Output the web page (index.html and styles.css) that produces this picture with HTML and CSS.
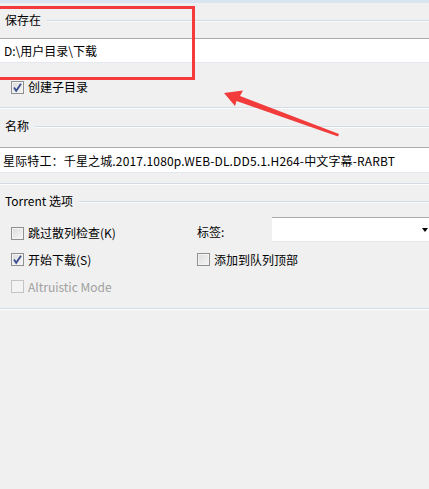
FILE: index.html
```html
<!DOCTYPE html>
<html>
<head>
<meta charset="utf-8">
<link rel="stylesheet" href="styles.css">
</head>
<body>
<div class="topstrip"></div>

<div class="group-head"><span class="gh-label">保存在</span><span class="gh-line"></span></div>
<div class="field field-path">D:\用户目录\下载</div>
<div class="row row-sub">
  <span class="cb checked"><svg viewBox="0 0 13 13" width="13" height="13"><path d="M3 6.5 L5.2 9.8 L10 2.8" fill="none" stroke="#3b4e8f" stroke-width="1.8"/></svg></span>
  <span class="cb-text">创建子目录</span>
</div>
<div class="sep sep1"></div>

<div class="group-head"><span class="gh-label">名称</span><span class="gh-line"></span></div>
<div class="field field-name">星际特工：千星之城.2017.1080p.WEB-DL.DD5.1.H264-中文字幕-RARBT</div>
<div class="sep sep2"></div>

<div class="group-head head3"><span class="gh-label">Torrent 选项</span><span class="gh-line"></span></div>
<div class="opts">
  <div class="opt-row r1">
    <div class="col-left">
      <span class="cb"></span><span class="cb-text">跳过散列检查(K)</span>
    </div>
    <div class="col-right">
      <span class="tag-label">标签:</span>
      <div class="combo"><span class="combo-arrow"></span></div>
    </div>
  </div>
  <div class="opt-row r2">
    <div class="col-left">
      <span class="cb checked"><svg viewBox="0 0 13 13" width="13" height="13"><path d="M3 6.5 L5.2 9.8 L10 2.8" fill="none" stroke="#3b4e8f" stroke-width="1.8"/></svg></span>
      <span class="cb-text">开始下载(S)</span>
    </div>
    <div class="col-right">
      <span class="cb"></span><span class="cb-text">添加到队列顶部</span>
    </div>
  </div>
  <div class="opt-row r3">
    <div class="col-left disabled">
      <span class="cb cb-disabled"></span><span class="cb-text">Altruistic Mode</span>
    </div>
  </div>
</div>
<div class="sep sep3"></div>

<div class="redbox"></div>
<svg class="arrow" width="429" height="489" viewBox="0 0 429 489">
  <polygon points="224,93 243,90.5 240,96 339,134 338,136.5 236.5,101 235,106" fill="#f23b3b"/>
</svg>
</body>
</html>
```

FILE: styles.css
```css
html, body {
  margin: 0;
  padding: 0;
}
body {
  width: 429px;
  height: 489px;
  overflow: hidden;
  background: #f0f0f0;
  font-family: "Noto Sans CJK SC", "Noto Sans", sans-serif;
  font-size: 12px;
  color: #000;
  position: relative;
}
.topstrip {
  height: 3px;
  background: #dae5f1;
}
.group-head {
  height: 34px;
  display: flex;
  align-items: center;
  padding-left: 5px;
}
.gh-label {
  line-height: 16px;
  margin-right: 6px;
}
.gh-line {
  flex: 1;
  border-top: 1px solid #d2dae2;
  border-bottom: 1px solid #fafbfc;
  margin-top: 2px;
  height: 0;
}
.field {
  background: #fff;
  border-top: 1px solid #a9abb0;
  border-bottom: 1px solid #e2e8ee;
  display: flex;
  align-items: center;
  white-space: nowrap;
  overflow: hidden;
}
.field-path {
  margin-top: 1px;
  height: 23px;
  padding-left: 4px;
}
.field-name {
  margin-top: 4px;
  height: 24px;
  padding-left: 3px;
  letter-spacing: 0.15px;
}
.row {
  display: flex;
  align-items: center;
}
.row-sub {
  margin-top: 12px;
  height: 24px;
  padding-left: 11px;
}
.cb {
  width: 11px;
  height: 11px;
  border: 1px solid #8e8f8f;
  background: linear-gradient(135deg, #dcdcdc 0%, #f6f6f6 100%);
  box-shadow: inset 0 0 0 1px #f4f4f4;
  display: inline-flex;
  flex: none;
  position: relative;
}
.cb svg {
  position: absolute;
  left: -1px;
  top: -1px;
}
.cb-disabled {
  border-color: #c4c4c4;
  background: #f3f3f3;
  box-shadow: none;
}
.cb-text {
  margin-left: 4px;
  line-height: 16px;
}
.disabled .cb-text {
  color: #a0a0a0;
}
.sep {
  height: 0;
  border-top: 1px solid #d4dbe2;
  border-bottom: 1px solid #fbfcfd;
}
.sep1 { margin-top: 8px; }
.sep2 { margin-top: 10px; }
.sep3 { margin-top: 8px; }
.head3 { height: 32px; }
.opts {
  padding-left: 11px;
}
.opt-row {
  display: flex;
  align-items: center;
  height: 27px;
}
.r1 { margin-top: 3px; height: 26px; }
.col-left {
  width: 186px;
  display: flex;
  align-items: center;
}
.col-right {
  flex: 1;
  display: flex;
  align-items: center;
}
.tag-label {
  width: 75px;
  line-height: 16px;
  margin-top: -3px;
}
.combo {
  flex: 1;
  height: 23px;
  background: #fff;
  border-top: 1px solid #acacac;
  border-bottom: 1px solid #e5e5e5;
  position: relative;
  margin-right: -2px;
  margin-bottom: 8px;
}
.combo-arrow {
  position: absolute;
  right: 3px;
  top: 10px;
  width: 0;
  height: 0;
  border-left: 3.5px solid transparent;
  border-right: 3.5px solid transparent;
  border-top: 4px solid #000;
}
.redbox {
  position: absolute;
  left: -4px;
  top: 6px;
  width: 193px;
  height: 68px;
  border: 3px solid #f43a3a;
}
.arrow {
  position: absolute;
  left: 0;
  top: 0;
}
```
